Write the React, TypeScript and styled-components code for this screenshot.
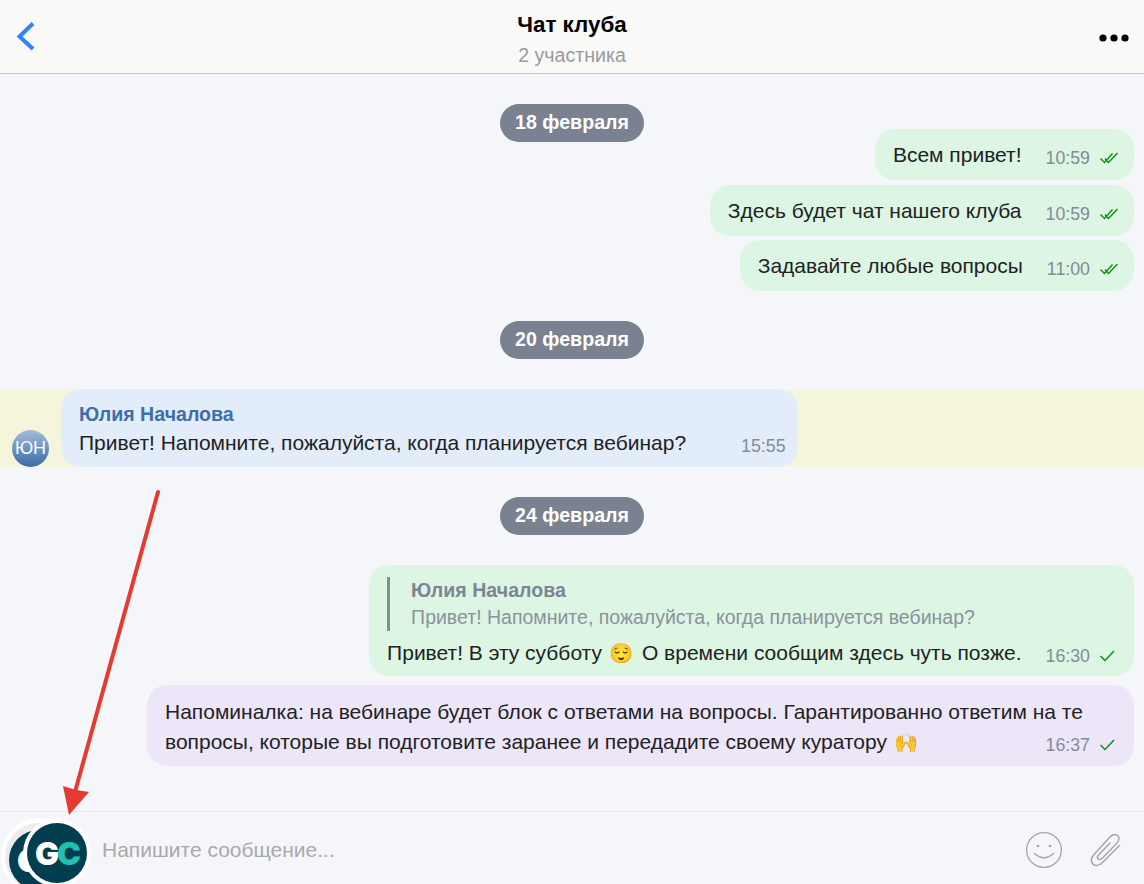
import React from "react";
import styled, { createGlobalStyle } from "styled-components";

const Global = createGlobalStyle`
  html, body { margin: 0; padding: 0; background: #f5f6f9; }
  body { font-family: "Liberation Sans", Arial, sans-serif; }
  * { box-sizing: border-box; }
`;

const Page = styled.div`
  position: relative;
  width: 1144px;
  height: 884px;
  display: flex;
  flex-direction: column;
  overflow: hidden;
  background: #f5f6f9;
`;

const Header = styled.header`
  height: 74px;
  flex: none;
  display: flex;
  align-items: center;
  justify-content: space-between;
  padding: 0 16px;
  background: #f9f9f7;
  border-bottom: 1px solid #c8c8c6;
`;

const HeaderSide = styled.div<{ $end?: boolean }>`
  width: 30px;
  display: flex;
  justify-content: ${(p) => (p.$end ? "flex-end" : "flex-start")};
`;

const HeaderTitle = styled.div`
  display: flex;
  flex-direction: column;
  align-items: center;
  gap: 5px;
  margin-top: 5px;
`;

const Title = styled.div`
  font-size: 22.4px;
  line-height: 26px;
  font-weight: 700;
  color: #000;
`;

const Subtitle = styled.div`
  font-size: 19.6px;
  line-height: 24px;
  color: #9b9b9b;
`;

const Feed = styled.main`
  flex: 1;
  display: flex;
  flex-direction: column;
`;

const DateRow = styled.div<{ $after?: number }>`
  display: flex;
  justify-content: center;
  margin: 30px 0 ${(p) => p.$after ?? 30}px;
`;

const DatePill = styled.div`
  height: 38px;
  padding: 0 15px 1px;
  display: flex;
  align-items: center;
  border-radius: 19px;
  background: #7a8291;
  color: #fff;
  font-size: 19.6px;
  font-weight: 700;
`;

const OutRow = styled.div<{ $top?: number }>`
  display: flex;
  justify-content: flex-end;
  padding-right: 10px;
  margin-top: ${(p) => p.$top ?? 0}px;
`;

const Bubble = styled.div<{ $bg: string; $width?: number; $top?: number; $bottom?: number }>`
  width: ${(p) => (p.$width ? `${p.$width}px` : "auto")};
  padding: ${(p) => p.$top ?? 11}px 16px ${(p) => p.$bottom ?? 10}px 18px;
  border-radius: 20px;
  background: ${(p) => p.$bg};
  font-size: 21px;
  line-height: 30px;
  color: #222;
`;

const LastLine = styled.div<{ $gap?: number }>`
  display: flex;
  justify-content: space-between;
  align-items: flex-end;
  gap: ${(p) => p.$gap ?? 24}px;
`;

const Meta = styled.div`
  flex: none;
  display: flex;
  align-items: center;
  gap: 10px;
  height: 30px;
  padding-top: 6px;
  font-size: 17.8px;
  color: #848b99;
`;

const HighlightRow = styled.div`
  display: flex;
  align-items: flex-end;
  gap: 12px;
  padding-left: 12px;
  background: #f5f5dc;
`;

const Avatar = styled.div`
  width: 37px;
  height: 37px;
  flex: none;
  border-radius: 50%;
  display: flex;
  align-items: center;
  justify-content: center;
  font-size: 18px;
  color: #fff;
  background: linear-gradient(#a5bdd8, #386aa8);
`;

const InBubble = styled(Bubble)`
  padding: 11px 12px 9px 18px;
`;

const SenderName = styled.div`
  font-size: 19.6px;
  font-weight: 700;
  color: #3f6ea8;
  line-height: 28px;
`;

const Quote = styled.div`
  margin-bottom: 7px;
  padding-left: 21px;
  border-left: 3px solid #848b99;
  line-height: 27px;
`;

const QuoteName = styled.div`
  font-size: 19.6px;
  font-weight: 700;
  color: #7d8594;
`;

const QuoteText = styled.div`
  font-size: 19.5px;
  color: #8b929f;
`;

const Emoji = styled.span`
  display: inline-block;
  margin: 0 2px;
  line-height: 1;
  font-family: "Noto Color Emoji", "Apple Color Emoji", sans-serif;
  font-size: 19.5px;
`;

const Footer = styled.footer`
  height: 73px;
  flex: none;
  display: flex;
  align-items: center;
  padding: 4px 22px 0 102px;
  border-top: 1px solid #e8e9eb;
`;

const Placeholder = styled.div`
  flex: 1;
  font-size: 21px;
  color: #a9a9a9;
`;

const FooterIcons = styled.div`
  display: flex;
  align-items: center;
  gap: 27px;
`;

const LogoCircle = styled.div<{ $left: number; $top: number; $rear?: boolean }>`
  position: absolute;
  left: ${(p) => p.$left}px;
  top: ${(p) => p.$top}px;
  width: 60px;
  height: 60px;
  border-radius: 50%;
  background: #033e50;
  box-shadow: ${(p) =>
    p.$rear ? "0 -3px 0 4px #ececec, 0 -4px 0 8px #fff" : "0 0 0 4px #fff"};
  display: flex;
  align-items: center;
  justify-content: center;
  font-family: Inter, "Liberation Sans", sans-serif;
  font-weight: 900;
  font-size: 32px;
  letter-spacing: -2px;
  color: #fff;
`;

const Teal = styled.span`
  color: #22c1ad;
`;

const ArrowOverlay = styled.svg`
  position: absolute;
  left: 0;
  top: 0;
  pointer-events: none;
`;

const Chevron = () => (
  <svg width="22" height="32" viewBox="0 0 22 32" style={{ marginTop: -1 }}>
    <path d="M17 3.5 L3.5 16.5 L17 29" fill="none" stroke="#2a85ff" strokeWidth="4" />
  </svg>
);

const Dots = () => (
  <svg width="30" height="8" viewBox="0 0 30 8" style={{ marginRight: -1, marginTop: 2 }}>
    <circle cx="4" cy="4" r="3.6" fill="#000" />
    <circle cx="15" cy="4" r="3.6" fill="#000" />
    <circle cx="26" cy="4" r="3.6" fill="#000" />
  </svg>
);

const DoubleCheck = () => (
  <svg width="18" height="12" viewBox="0 0 18 12">
    <path d="M0.5 6.5 L4.5 10.5 L12.5 1.5 M5 6.5 L8.5 10.5 L17.5 1" fill="none" stroke="#0a8f14" strokeWidth="1.4" />
  </svg>
);

const SingleCheck = () => (
  <svg width="18" height="12" viewBox="0 0 18 12">
    <path d="M0.5 6 L5 10.5 L14 1" fill="none" stroke="#0a8f14" strokeWidth="1.5" />
  </svg>
);

const Smile = () => (
  <svg width="38" height="38" viewBox="0 0 38 38">
    <circle cx="19" cy="19" r="17.4" fill="none" stroke="#a6a6a6" strokeWidth="1.3" />
    <circle cx="13" cy="15" r="1.3" fill="#a6a6a6" />
    <circle cx="25" cy="15" r="1.3" fill="#a6a6a6" />
    <path d="M9.5 22.5 Q19 31 28.5 22.5" fill="none" stroke="#a6a6a6" strokeWidth="1.4" strokeLinecap="round" />
  </svg>
);

const Clip = () => (
  <svg width="32" height="36" viewBox="0 0 32 36">
    <path
      d="M29.5 13.5 L13 30 C9.5 34 4.5 34.5 2.5 31.5 C0.5 28.5 1.5 25 4 22.5 L19.5 5.5 C22 3 25.5 1.5 27.5 3.5 C30 5.5 29 9 27 11 L12.5 26 C11 27.5 9 28 8 27 C7 26 7.5 24 9 22.5 L20 11"
      fill="none"
      stroke="#a6a6a6"
      strokeWidth="1.5"
      strokeLinecap="round"
      strokeLinejoin="round"
    />
  </svg>
);

export default function App() {
  return (
    <Page>
      <Global />
      <Header>
        <HeaderSide>
          <Chevron />
        </HeaderSide>
        <HeaderTitle>
          <Title>Чат клуба</Title>
          <Subtitle>2 участника</Subtitle>
        </HeaderTitle>
        <HeaderSide $end>
          <Dots />
        </HeaderSide>
      </Header>
      <Feed>
        <DateRow $after={-13}>
          <DatePill>18 февраля</DatePill>
        </DateRow>
        <OutRow>
          <Bubble $bg="#ddf5e3">
            <LastLine>
              <span>Всем привет!</span>
              <Meta>10:59 <DoubleCheck /></Meta>
            </LastLine>
          </Bubble>
        </OutRow>
        <OutRow $top={5}>
          <Bubble $bg="#ddf5e3">
            <LastLine>
              <span>Здесь будет чат нашего клуба</span>
              <Meta>10:59 <DoubleCheck /></Meta>
            </LastLine>
          </Bubble>
        </OutRow>
        <OutRow $top={4}>
          <Bubble $bg="#ddf5e3">
            <LastLine>
              <span>Задавайте любые вопросы</span>
              <Meta>11:00 <DoubleCheck /></Meta>
            </LastLine>
          </Bubble>
        </OutRow>
        <DateRow>
          <DatePill>20 февраля</DatePill>
        </DateRow>
        <HighlightRow>
          <Avatar>ЮН</Avatar>
          <InBubble $bg="#e3edfa">
            <SenderName>Юлия Началова</SenderName>
            <LastLine $gap={55}>
              <span>Привет! Напомните, пожалуйста, когда планируется вебинар?</span>
              <Meta>15:55</Meta>
            </LastLine>
          </InBubble>
        </HighlightRow>
        <DateRow>
          <DatePill>24 февраля</DatePill>
        </DateRow>
        <OutRow>
          <Bubble $bg="#ddf5e3" $top={12} $bottom={8}>
            <Quote>
              <QuoteName>Юлия Началова</QuoteName>
              <QuoteText>Привет! Напомните, пожалуйста, когда планируется вебинар?</QuoteText>
            </Quote>
            <LastLine>
              <span>Привет! В эту субботу <Emoji>😌</Emoji> О времени сообщим здесь чуть позже.</span>
              <Meta>16:30 <SingleCheck /></Meta>
            </LastLine>
          </Bubble>
        </OutRow>
        <OutRow $top={9}>
          <Bubble $bg="#ede6f9" $width={987} $top={12} $bottom={9}>
            <div>Напоминалка: на вебинаре будет блок с ответами на вопросы. Гарантированно ответим на те</div>
            <LastLine>
              <span>вопросы, которые вы подготовите заранее и передадите своему куратору <Emoji>🙌</Emoji></span>
              <Meta>16:37 <SingleCheck /></Meta>
            </LastLine>
          </Bubble>
        </OutRow>
      </Feed>
      <Footer>
        <Placeholder>Напишите сообщение...</Placeholder>
        <FooterIcons>
          <Smile />
          <Clip />
        </FooterIcons>
      </Footer>
      <LogoCircle $left={9} $top={830} $rear>
        G<Teal>C</Teal>
      </LogoCircle>
      <LogoCircle $left={27} $top={823}>
        G<Teal>C</Teal>
      </LogoCircle>
      <ArrowOverlay width="1144" height="884" viewBox="0 0 1144 884">
        <path d="M158 492 L75 792" stroke="#e53a30" strokeWidth="4" strokeLinecap="round" fill="none" />
        <path d="M69 815 L63 786 L76 790 L89 792 Z" fill="#e53a30" />
      </ArrowOverlay>
    </Page>
  );
}
